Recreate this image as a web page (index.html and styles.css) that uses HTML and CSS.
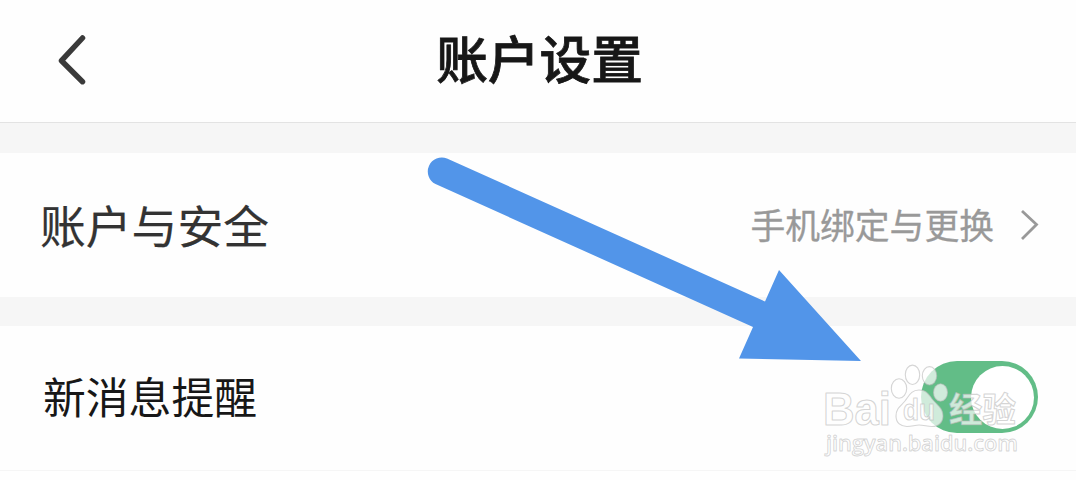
FILE: index.html
```html
<!DOCTYPE html>
<html lang="zh-CN">
<head>
<meta charset="utf-8">
<title>账户设置</title>
<link rel="stylesheet" href="styles.css">
</head>
<body>
<main class="screen">
  <header class="topbar">
    <svg class="back" viewBox="0 0 32 52" aria-hidden="true"><path d="M26.500 5 5.500 27.700 26.500 48.700"/></svg>
    <h1 class="title">账户设置</h1>
  </header>
  <section class="row row-security">
    <span class="label label-security">账户与安全</span>
    <span class="value">手机绑定与更换</span>
    <svg class="chevron" viewBox="0 0 20 32" aria-hidden="true"><path d="M2 2 16.500 15.500 2 30"/></svg>
  </section>
  <section class="row row-message">
    <span class="label label-message">新消息提醒</span>
    <span class="toggle"><span class="knob"></span></span>
  </section>
  <svg class="overlay" viewBox="0 0 1076 480" aria-hidden="true">
    <path class="arrow" d="M447 158.500 765 301.500 779 270 861 361 739 358.500 753 327 435.500 184A14 14 0 0 1 447 158.500Z"/>
    <g class="mark">
      <text class="mark-bai" x="823" y="424.500" textLength="68" lengthAdjust="spacingAndGlyphs">Bai</text>
      <ellipse cx="899" cy="388.500" rx="7.700" ry="9.700"/>
      <ellipse cx="912.500" cy="374.800" rx="7.200" ry="9.700"/>
      <ellipse cx="929.500" cy="375.800" rx="7.200" ry="9.200"/>
      <ellipse cx="940.500" cy="392.500" rx="7" ry="8.700"/>
      <path d="M919 390C911 390 909 396 905 401C901 406 896 408 896 416C896 423 901 426.500 907 426.500C912 426.500 915 425 919 425C924 425 927 426.500 932 426.500C939 426.500 943 422 943 416C943 408 937 405 933 400C929 395 927 390 919 390Z"/>
      <text class="mark-du" x="903" y="420" textLength="32" lengthAdjust="spacingAndGlyphs">du</text>
      <text class="mark-cn" x="949" y="421.500" textLength="67" lengthAdjust="spacingAndGlyphs">经验</text>
      <text class="mark-url" x="826" y="450.500" textLength="192" lengthAdjust="spacingAndGlyphs">jingyan.baidu.com</text>
    </g>
  </svg>
</main>
</body>
</html>
```
FILE: styles.css
```css
* { box-sizing: border-box; }
body { margin: 0; background: #fefefe; font-family: "Noto Sans CJK SC", sans-serif; }
.screen {
  position: relative;
  display: flex;
  flex-direction: column;
  height: 480px;
  overflow: hidden;
}
.topbar {
  display: grid;
  grid-template-columns: 1fr auto 1fr;
  align-items: center;
  height: 123px;
  padding: 0 56px;
  border-bottom: 1px solid #e3e3e3;
}
.back { width: 32px; height: 52px; margin-bottom: 5px; fill: none; stroke: #3a3a3a; stroke-width: 5.5; stroke-linecap: round; stroke-linejoin: round; }
.title { margin: 0 0 8px; padding-left: 3px; font-size: 51.7px; line-height: 60px; font-weight: 500; color: #171717; -webkit-text-stroke: .8px #171717; }
.row { display: flex; align-items: center; }
.row-security { height: 203px; border: solid #f6f6f6; border-width: 30px 0 29px; padding: 0 36px 0 40px; }
.row-message { height: 145px; border-bottom: 1px solid #f5f5f5; padding: 0 38px 0 43px; }
.label { flex: 1; white-space: nowrap; }
.label-security { padding-bottom: 3px; font-size: 45.8px; color: #333; -webkit-text-stroke: .2px #333; }
.label-message { padding-bottom: 7px; font-size: 42.8px; color: #171717; }
.value { padding-bottom: 3px; font-size: 34.8px; color: #999; white-space: nowrap; -webkit-text-stroke: .3px #999; }
.chevron { width: 20px; height: 32px; margin: 0 0 1px 26px; fill: none; stroke: #999; stroke-width: 2.8; }
.toggle { display: flex; justify-content: flex-end; align-items: center; width: 117px; height: 72px; margin-bottom: 2px; padding: 0 4px; border-radius: 36px; background: #62bd87; }
.knob { width: 63px; height: 63px; border-radius: 50%; background: #fff; }
.overlay { position: absolute; inset: 0; width: 1076px; height: 480px; pointer-events: none; }
.arrow { fill: #5295e9; }
.mark { fill: rgba(255, 255, 255, .7); stroke: rgba(185, 185, 185, .6); stroke-width: 1.1; stroke-linejoin: round; }
.mark-bai { font: 700 46px "Liberation Sans", sans-serif; }
.mark-du { font: 700 29px "Liberation Sans", sans-serif; }
.mark-cn { font: 700 34px "Noto Sans CJK SC", sans-serif; }
.mark-url { font: 600 22px "Open Sans", sans-serif; stroke-width: .9; }
```
